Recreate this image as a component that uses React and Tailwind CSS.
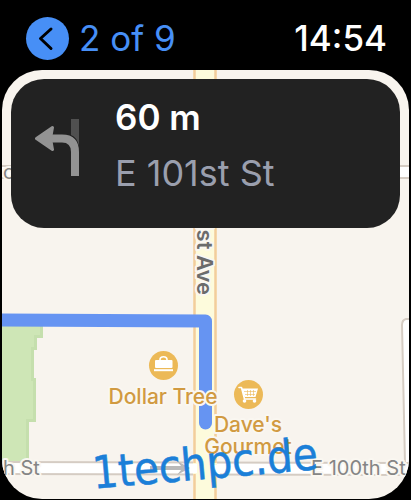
const halo = {
  stroke: "#faf7f1",
  strokeWidth: 4,
  strokeLinejoin: "round",
  paintOrder: "stroke",
};

function RoadMap() {
  return (
    <svg
      viewBox="2 70 407 429"
      preserveAspectRatio="xMidYMid slice"
      className="block h-full min-h-[429px] w-full font-['Inter','Liberation_Sans',sans-serif]"
      role="img"
      aria-label="Route map"
    >
      <rect x="2" y="70" width="407" height="429" fill="#f8f4ee" />

      {/* park */}
      <path d="M2 322H43V338H37V350H34V378H36V422H29V462H2Z" fill="#c5dfad" />
      <path d="M2 322H40V335H34V347H31V381H33V419H26V462H2Z" fill="#cee6b6" />

      {/* side streets */}
      <path d="M2 166H409V178H2Z" fill="#ffffff" />
      <path d="M2 166H409M2 178H409" stroke="#d5ccc3" strokeWidth="2" />
      <path d="M409 319H406Q402 320 402 325L405 463H409Z" fill="#ffffff" />
      <path d="M409 319H406Q402 320 402 325L405 463" fill="none" stroke="#d5ccc3" strokeWidth="2" />
      <path d="M2 462L409 463V475L2 474Z" fill="#ffffff" />
      <path d="M2 462L409 463M2 474L409 475" stroke="#d5ccc3" strokeWidth="2" />
      <path d="M150 466H181L177 461L190 468L177 475L181 470H150Z" fill="#b9b9b9" />

      {/* avenue */}
      <rect x="193" y="70" width="24" height="429" fill="#fdfbdc" />
      <path d="M194.500 70V463M194.500 474V499M215.500 70V463M215.500 475V499" stroke="#f2cd9c" strokeWidth="2.500" />
      <path d="M190 464H197V473H190ZM213 465H220V474H213Z" fill="#ffffff" />

      {/* route */}
      <path d="M0 320L205.500 321V423" fill="none" stroke="#6694f2" strokeWidth="13" strokeLinejoin="round" />
      <path d="M205.500 400V423" stroke="#6694f2" strokeWidth="13" strokeLinecap="round" />

      <g {...halo}>
        <text x="3" y="179" fontSize="20" fill="#858585">c</text>
        <text transform="translate(197 295) rotate(90)" textAnchor="end" fontSize="22" fontWeight="600" fill="#6b6b6b">1st Ave</text>
        <text x="3" y="475" fontSize="20" fill="#858585">h St</text>
        <text x="311" y="475" fontSize="20" fill="#858585">E 100th St</text>
        <g fontSize="21" fontWeight="500" fill="#d19a41">
          <text x="163" y="404" textAnchor="middle">Dollar Tree</text>
          <text x="248" y="432" textAnchor="middle">Dave's</text>
          <text x="248" y="454" textAnchor="middle">Gourmet</text>
        </g>
      </g>

      {/* briefcase pin */}
      <circle cx="163.500" cy="365.500" r="14.500" fill="#ecb957" />
      <rect x="155" y="360" width="17.500" height="8" rx="1" fill="#ffffff" />
      <rect x="154" y="369.200" width="19" height="2" fill="#ffffff" />
      <path d="M160 361V359.500Q160 356.800 163.500 356.800T167 359.500V361" fill="none" stroke="#ffffff" strokeWidth="1.600" />

      {/* cart pin */}
      <circle cx="248.500" cy="394.500" r="14.500" fill="#ecb957" />
      <path d="M241.500 388.500H258L255.500 397H244.500Z" fill="#ffffff" />
      <path d="M239 387.500H241.500L244.500 399H255.500" fill="none" stroke="#ffffff" strokeWidth="1.600" strokeLinecap="round" strokeLinejoin="round" />
      <path d="M244 391.500H256M245 394.500H255M247.500 390V396M250.500 390V396M253.500 390V396" stroke="#ecb957" strokeWidth="0.600" />
      <circle cx="244.500" cy="401" r="1.800" fill="#ffffff" />
      <circle cx="254.500" cy="401" r="1.800" fill="#ffffff" />
    </svg>
  );
}

function TurnLeft() {
  return (
    <svg viewBox="35 119 44 57" className="h-[57px] w-11 shrink-0" aria-hidden="true">
      <path d="M71 119H79V146Q77 137 71 135Z" fill="#505050" />
      <path d="M50 138.500H62Q75 138.500 75 152V176" fill="none" stroke="#939393" strokeWidth="8" />
      <path d="M36.500 138.500L52.500 127.500L50.500 138.500L52.500 149.500Z" fill="#939393" stroke="#939393" strokeWidth="3" strokeLinejoin="round" />
    </svg>
  );
}

export default function App() {
  return (
    <div className="relative flex min-h-screen flex-col overflow-hidden bg-black pb-px font-['Inter','Liberation_Sans',sans-serif]">
      <header className="flex h-[70px] items-center justify-between pt-1.5 pr-6 pl-[26px]">
        <div className="flex items-center gap-2.5 text-[#478ff6]">
          <button type="button" aria-label="Back" className="flex size-[43px] items-center justify-center rounded-full bg-[#478ff6]">
            <svg viewBox="0 0 43 43" className="size-[43px]" aria-hidden="true">
              <path d="M25 12L14.500 21.500L25 31.500" fill="none" stroke="#000000" strokeWidth="3" strokeLinecap="round" strokeLinejoin="round" />
            </svg>
          </button>
          <span className="text-[35px] leading-[44px]">2 of 9</span>
        </div>
        <time className="text-[35px] leading-[44px] font-medium text-white">14:54</time>
      </header>

      <main className="relative mx-0.5 flex-1 overflow-hidden rounded-[40px]">
        <RoadMap />
        <section className="absolute inset-x-[9px] top-[9px] flex items-start gap-9 rounded-[33px] bg-[#222222] pt-3.5 pr-6 pb-[31px] pl-6">
          <div className="pt-[26px]">
            <TurnLeft />
          </div>
          <div className="flex flex-col gap-2 leading-[48px]">
            <h1 className="text-[35px] leading-[48px] font-semibold text-white">60 m</h1>
            <p className="text-[36px] leading-[48px] text-[#9a9fae]">E 101st St</p>
          </div>
        </section>
      </main>

      <span className="absolute bottom-2.5 left-[92px] -rotate-5 font-['DejaVu_Sans_Condensed','DejaVu_Sans',sans-serif] text-[45px] leading-[52px] text-[#1b7fd8] [-webkit-text-stroke:0.5px_#1b7fd8]">
        1techpc.de
      </span>
    </div>
  );
}
